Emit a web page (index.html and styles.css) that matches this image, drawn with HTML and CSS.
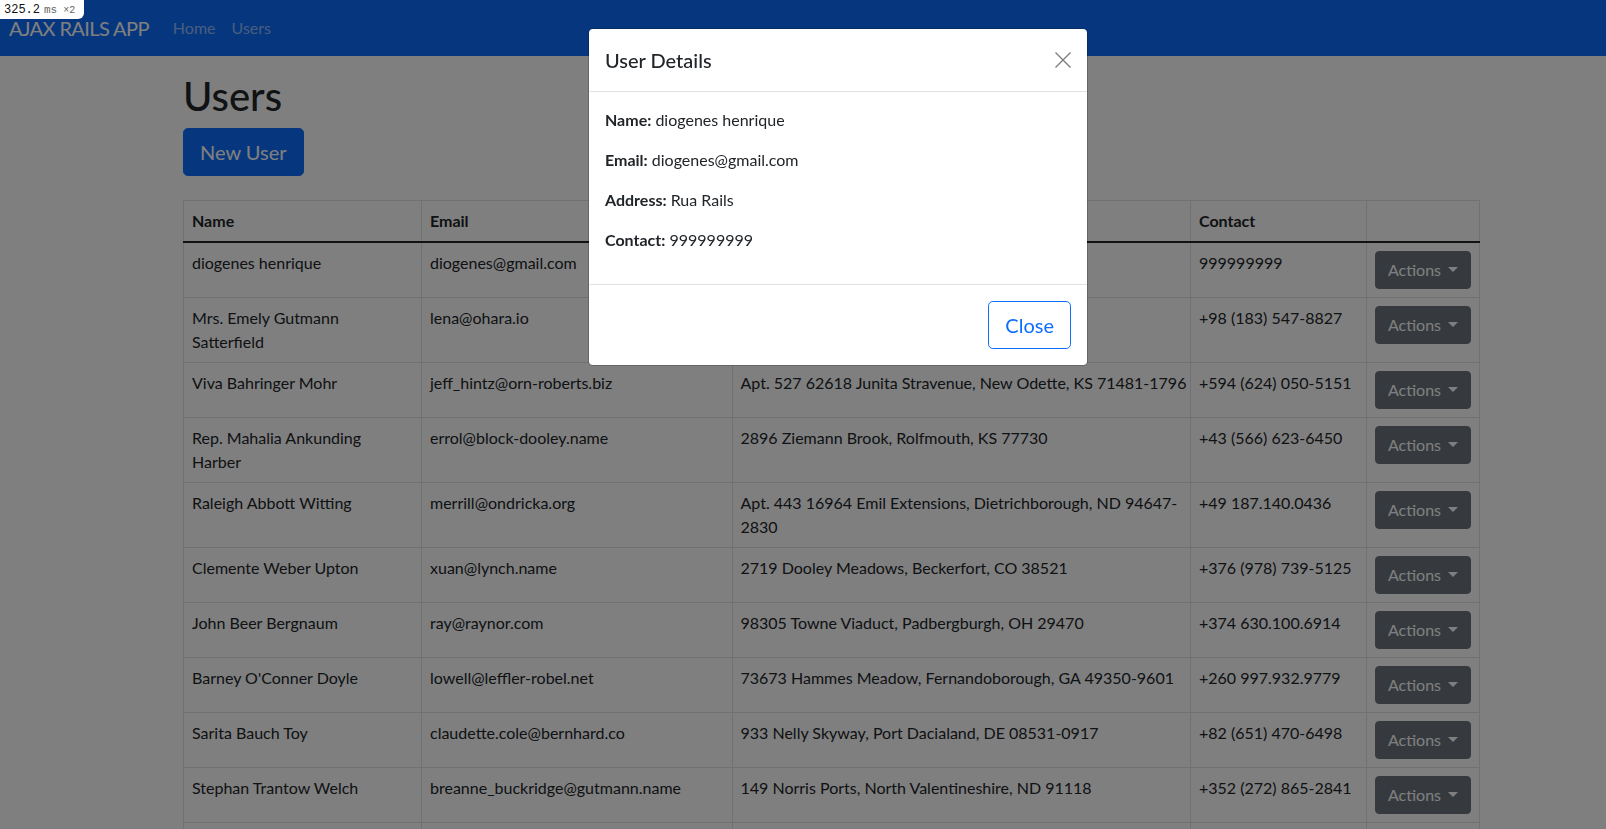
FILE: index.html
```html
<!DOCTYPE html>
<html lang="en">
<head>
<meta charset="utf-8">
<title>Ajax Rails App</title>
<link rel="stylesheet" href="styles.css">
</head>
<body class="modal-open">
  <div class="profiler-badge"><span class="pb-time">325.2</span><span class="pb-unit">ms</span><span class="pb-count">×2</span></div>

  <nav class="navbar">
    <div class="navbar-inner">
      <a class="navbar-brand" href="#">AJAX RAILS APP</a>
      <ul class="navbar-nav">
        <li><a class="nav-link" href="#">Home</a></li>
        <li><a class="nav-link" href="#">Users</a></li>
      </ul>
    </div>
  </nav>

  <main class="container">
    <h1 class="page-title">Users</h1>
    <a class="btn btn-primary btn-lg" href="#">New User</a>

    <table class="table">
      <colgroup>
        <col class="col-name">
        <col class="col-email">
        <col class="col-address">
        <col class="col-contact">
        <col class="col-actions">
      </colgroup>
      <thead>
        <tr><th>Name</th><th>Email</th><th>Address</th><th>Contact</th><th></th></tr>
      </thead>
      <tbody>
        <tr><td>diogenes henrique</td><td>diogenes@gmail.com</td><td class="addr">Rua Rails</td><td>999999999</td><td><button class="btn btn-secondary dropdown-toggle">Actions</button></td></tr>
        <tr><td>Mrs. Emely Gutmann<br>Satterfield</td><td>lena@ohara.io</td><td class="addr">8421 Kuhic Island, MT 53012</td><td>+98 (183) 547-8827</td><td><button class="btn btn-secondary dropdown-toggle">Actions</button></td></tr>
        <tr><td>Viva Bahringer Mohr</td><td>jeff_hintz@orn-roberts.biz</td><td class="addr">Apt. 527 62618 Junita Stravenue, New Odette, KS 71481-1796</td><td>+594 (624) 050-5151</td><td><button class="btn btn-secondary dropdown-toggle">Actions</button></td></tr>
        <tr><td>Rep. Mahalia Ankunding<br>Harber</td><td>errol@block-dooley.name</td><td class="addr">2896 Ziemann Brook, Rolfmouth, KS 77730</td><td>+43 (566) 623-6450</td><td><button class="btn btn-secondary dropdown-toggle">Actions</button></td></tr>
        <tr><td>Raleigh Abbott Witting</td><td>merrill@ondricka.org</td><td class="addr">Apt. 443 16964 Emil Extensions, Dietrichborough, ND 94647-<br>2830</td><td>+49 187.140.0436</td><td><button class="btn btn-secondary dropdown-toggle">Actions</button></td></tr>
        <tr><td>Clemente Weber Upton</td><td>xuan@lynch.name</td><td class="addr">2719 Dooley Meadows, Beckerfort, CO 38521</td><td>+376 (978) 739-5125</td><td><button class="btn btn-secondary dropdown-toggle">Actions</button></td></tr>
        <tr><td>John Beer Bergnaum</td><td>ray@raynor.com</td><td class="addr">98305 Towne Viaduct, Padbergburgh, OH 29470</td><td>+374 630.100.6914</td><td><button class="btn btn-secondary dropdown-toggle">Actions</button></td></tr>
        <tr><td>Barney O'Conner Doyle</td><td>lowell@leffler-robel.net</td><td class="addr">73673 Hammes Meadow, Fernandoborough, GA 49350-9601</td><td>+260 997.932.9779</td><td><button class="btn btn-secondary dropdown-toggle">Actions</button></td></tr>
        <tr><td>Sarita Bauch Toy</td><td>claudette.cole@bernhard.co</td><td class="addr">933 Nelly Skyway, Port Dacialand, DE 08531-0917</td><td>+82 (651) 470-6498</td><td><button class="btn btn-secondary dropdown-toggle">Actions</button></td></tr>
        <tr><td>Stephan Trantow Welch</td><td>breanne_buckridge@gutmann.name</td><td class="addr">149 Norris Ports, North Valentineshire, ND 91118</td><td>+352 (272) 865-2841</td><td><button class="btn btn-secondary dropdown-toggle">Actions</button></td></tr>
        <tr class="row-cut"><td></td><td></td><td></td><td></td><td></td></tr>
      </tbody>
    </table>
  </main>

  <div class="modal-backdrop"></div>

  <div class="modal-content" role="dialog" aria-labelledby="userDetailsTitle">
    <div class="modal-header">
      <h5 class="modal-title" id="userDetailsTitle">User Details</h5>
      <button class="btn-close" aria-label="Close">
        <svg width="16" height="16" viewBox="0 0 16 16" aria-hidden="true"><path d="M1 1L15 15M15 1L1 15" stroke="#000" stroke-width="1.4" stroke-linecap="square" fill="none"/></svg>
      </button>
    </div>
    <div class="modal-body">
      <p><strong>Name:</strong> diogenes henrique</p>
      <p><strong>Email:</strong> diogenes@gmail.com</p>
      <p><strong>Address:</strong> Rua Rails</p>
      <p><strong>Contact:</strong> 999999999</p>
    </div>
    <div class="modal-footer">
      <button class="btn btn-outline-primary btn-lg">Close</button>
    </div>
  </div>
</body>
</html>
```
FILE: styles.css
```css
* { box-sizing: border-box; }

html, body { margin: 0; padding: 0; }

body {
  font-family: "Lato", "Liberation Sans", sans-serif;
  font-size: 16px;
  line-height: 1.5;
  color: #212529;
  background: #fff;
}

body.modal-open { overflow: hidden; height: 829px; }

a { text-decoration: none; }

/* profiler badge */
.profiler-badge {
  position: fixed;
  top: 0;
  left: 0;
  z-index: 2000;
  width: 84px;
  height: 19px;
  padding: 0 0 0 4px;
  background: #fff;
  border-bottom-right-radius: 6px;
  font-family: "Liberation Mono", "DejaVu Sans Mono", monospace;
  line-height: 18px;
  white-space: nowrap;
}
.pb-time { font-size: 12px; color: #111; }
.pb-unit { font-size: 11px; color: #666; margin-left: 4px; }
.pb-count { font-size: 10px; color: #666; margin-left: 6px; }

/* navbar */
.navbar {
  background: #0d6efd;
  padding: 8px 0;
}
.navbar-inner {
  display: flex;
  align-items: center;
  padding: 0 9px;
}
.navbar-brand {
  color: #fff;
  font-size: 20px;
  line-height: 30px;
  padding: 5px 0;
  margin-right: 16px;
  letter-spacing: -0.6px;
  white-space: nowrap;
}
.navbar-nav {
  display: flex;
  list-style: none;
  margin: 0;
  padding: 0;
}
.nav-link {
  display: block;
  padding: 8px;
  color: rgba(255, 255, 255, 0.55);
  line-height: 24px;
}

/* page */
.container {
  width: 1320px;
  margin-left: 171px;
  padding: 0 12px;
}
.page-title {
  font-size: 40px;
  font-weight: 500;
  line-height: 1.2;
  margin: 16px 0 8px;
}

.btn {
  display: inline-block;
  font-family: inherit;
  font-size: 16px;
  line-height: 24px;
  padding: 6px 12px;
  border: 1px solid transparent;
  border-radius: 4px;
  text-align: center;
  vertical-align: middle;
  cursor: pointer;
  white-space: nowrap;
}
.btn-lg {
  font-size: 20px;
  line-height: 30px;
  padding: 8px 16px;
  border-radius: 4.8px;
}
.btn-primary {
  color: #fff;
  background: #0d6efd;
  border-color: #0d6efd;
}
.btn-secondary {
  color: #fff;
  background: #6c757d;
  border-color: #6c757d;
}
.btn-outline-primary {
  color: #0d6efd;
  background: transparent;
  border-color: #0d6efd;
}
.dropdown-toggle::after {
  content: "";
  display: inline-block;
  margin-left: 7px;
  vertical-align: 0.255em;
  border-top: 0.32em solid;
  border-right: 0.32em solid transparent;
  border-left: 0.32em solid transparent;
  border-bottom: 0;
}

/* table */
.table {
  width: 1296px;
  margin-top: 24px;
  border-collapse: collapse;
  table-layout: fixed;
  vertical-align: top;
}
.col-name { width: 238px; }
.col-email { width: 310.5px; }
.col-address { width: 458.5px; }
.col-contact { width: 176px; }
.col-actions { width: 113px; }

.table th,
.table td {
  padding: 8px;
  border: 1px solid #dee2e6;
  text-align: left;
  vertical-align: top;
  line-height: 24px;
}
.table th { font-weight: 700; }
.table tbody tr:first-child td { border-top: 2px solid #212529; }
.table td.addr { white-space: nowrap; }
.table .row-cut td { height: 55px; }

/* modal */
.modal-backdrop {
  position: fixed;
  inset: 0;
  z-index: 1050;
  background: rgba(0, 0, 0, 0.5);
}
.modal-content {
  position: fixed;
  z-index: 1060;
  top: 28px;
  left: 588px;
  width: 500px;
  background: #fff;
  border: 1px solid rgba(0, 0, 0, 0.2);
  border-radius: 4.8px;
  background-clip: padding-box;
}
.modal-header {
  display: flex;
  align-items: center;
  justify-content: space-between;
  padding: 16px;
  border-bottom: 1px solid #dee2e6;
}
.modal-title {
  margin: 0;
  font-size: 20px;
  font-weight: 500;
  line-height: 30px;
}
.btn-close {
  display: flex;
  padding: 0;
  width: 16px;
  height: 16px;
  border: 0;
  background: transparent;
  opacity: 0.5;
  cursor: pointer;
}
.modal-body { padding: 16px; }
.modal-body p { margin: 0 0 16px; }
.modal-footer {
  display: flex;
  justify-content: flex-end;
  padding: 12px;
  border-top: 1px solid #dee2e6;
}
.modal-footer .btn { margin: 4px; }
```
